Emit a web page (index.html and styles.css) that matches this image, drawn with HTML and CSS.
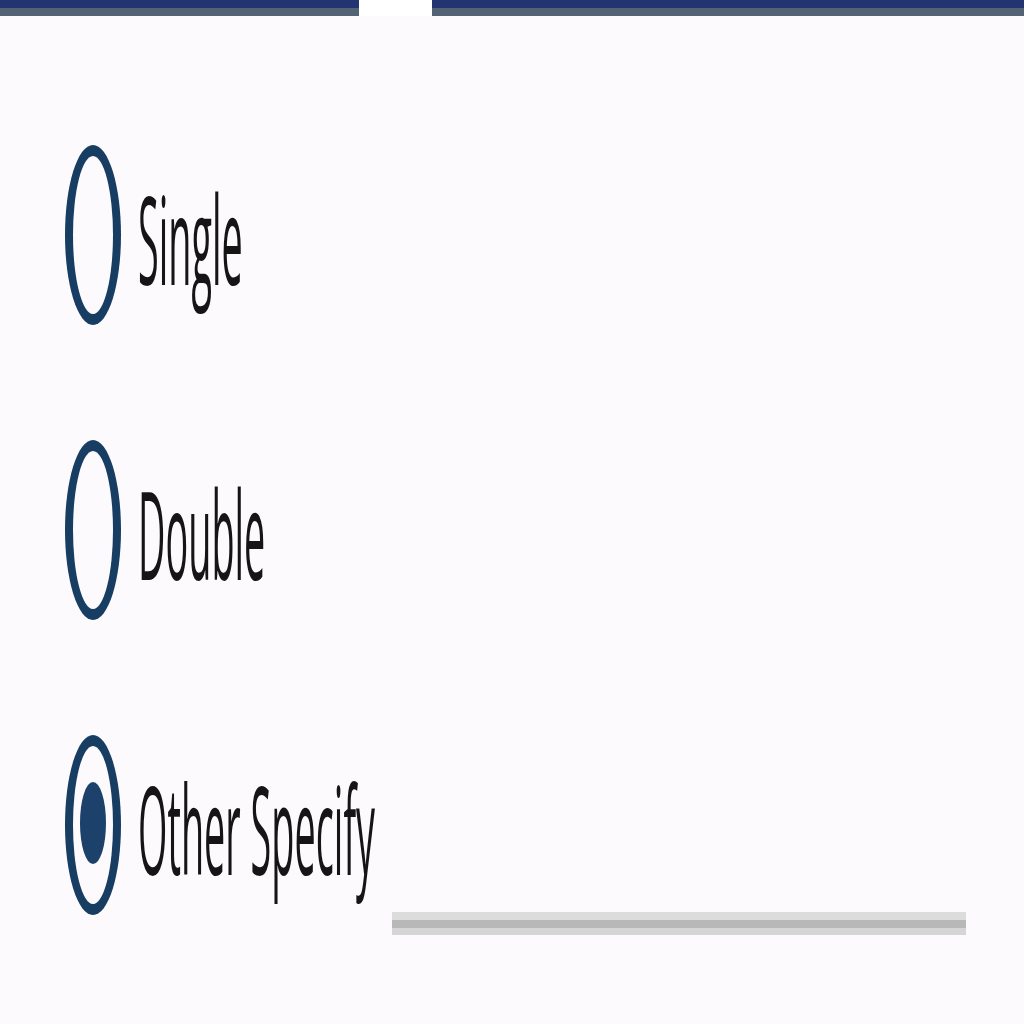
FILE: index.html
```html
<!DOCTYPE html>
<html lang="en">
<head>
<meta charset="utf-8">
<title>Options</title>
<link rel="stylesheet" href="styles.css">
</head>
<body>
<header class="topbar">
  <div class="bar bar-left"></div>
  <div class="bar-gap"></div>
  <div class="bar bar-right"></div>
</header>
<main class="options">
  <label class="option">
    <svg class="radio" viewBox="0 0 56 180" width="56" height="180" aria-hidden="true">
      <ellipse cx="28" cy="90" rx="28" ry="90" fill="#173d63"/>
      <ellipse cx="28" cy="90" rx="20" ry="79" fill="#fdfafd"/>
    </svg>
    <span class="label-text">Single</span>
  </label>
  <label class="option">
    <svg class="radio" viewBox="0 0 56 180" width="56" height="180" aria-hidden="true">
      <ellipse cx="28" cy="90" rx="28" ry="90" fill="#173d63"/>
      <ellipse cx="28" cy="90" rx="20" ry="79" fill="#fdfafd"/>
    </svg>
    <span class="label-text">Double</span>
  </label>
  <label class="option option-other">
    <svg class="radio" viewBox="0 0 56 180" width="56" height="180" aria-hidden="true">
      <ellipse cx="28" cy="90" rx="28" ry="90" fill="#173d63"/>
      <ellipse cx="28" cy="90" rx="20" ry="79" fill="#fdfafd"/>
      <ellipse cx="28" cy="88" rx="13" ry="41" fill="#1c416b"/>
    </svg>
    <span class="label-text">Other Specify</span>
    <span class="specify-field"></span>
  </label>
</main>
</body>
</html>
```
FILE: styles.css
```css
html, body {
  margin: 0;
  padding: 0;
}
body {
  background: #fdfafd;
  width: 1024px;
  height: 1024px;
  overflow: hidden;
  font-family: "Open Sans", "Liberation Sans", sans-serif;
  color: #151515;
}
.topbar {
  display: flex;
  height: 16px;
}
.bar {
  height: 8px;
  background: #233570;
  border-bottom: 8px solid #536275;
}
.bar-left {
  width: 359px;
}
.bar-gap {
  width: 73px;
  background: #ffffff;
}
.bar-right {
  flex: 1;
}
.options {
  display: flex;
  flex-direction: column;
  gap: 115px;
  padding: 129px 58px 0 65px;
}
.option {
  display: flex;
  align-items: center;
  height: 180px;
}
.radio {
  flex: none;
  display: block;
}
.label-text {
  display: inline-block;
  margin-left: 17px;
  font-size: 122px;
  line-height: 1;
  white-space: nowrap;
  transform: scaleX(0.31);
  transform-origin: left center;
  width: 0;
  overflow: visible;
  position: relative;
  top: 3px;
}
.option-other .label-text {
  width: 236px;
}
.specify-field {
  flex: 1;
  align-self: flex-end;
  height: 23px;
  margin-bottom: -20px;
  margin-left: 18px;
  background: linear-gradient(#dcdcdc 0 8px, #b8b8b8 8px 16px, #d5d5d5 16px 23px);
}
```
